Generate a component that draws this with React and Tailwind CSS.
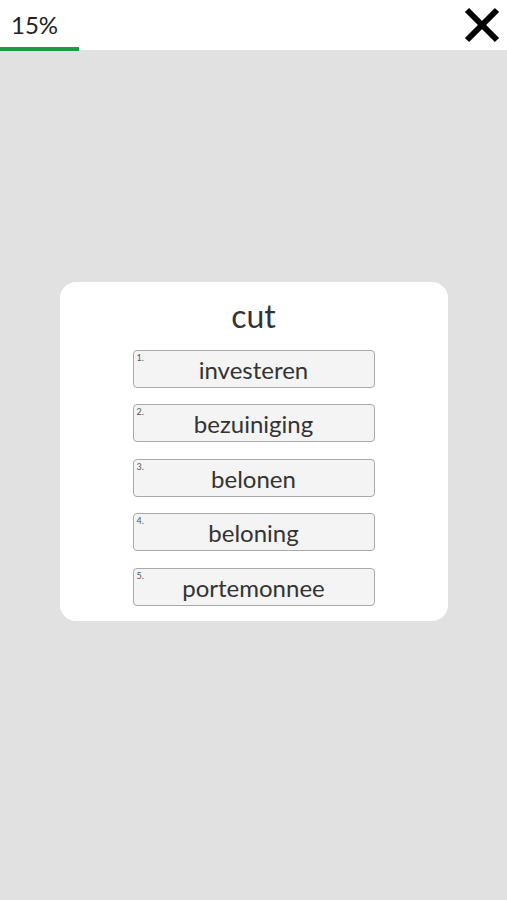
const OPTIONS = ['investeren', 'bezuiniging', 'belonen', 'beloning', 'portemonnee'];

export default function App() {
  return (
    <div className="h-[900px] w-full flex flex-col bg-[#e1e1e1] text-[#333]" style={{ fontFamily: 'Lato, "Open Sans", sans-serif' }}>
      {/* Top bar */}
      <div className="relative h-[50px] bg-white flex items-start justify-between shrink-0">
        <span className="ml-[11px] mt-[10px] text-[24px] leading-[30px] text-[#222]">15%</span>
        <svg width="36" height="36" viewBox="0 0 36 36" className="mr-[7px] mt-[7px]">
          <path d="M3 3 L33 33 M33 3 L3 33" stroke="#000" strokeWidth="6" strokeLinecap="butt" />
        </svg>
        <div className="absolute left-0 bottom-[-1px] h-[4px] w-[79px] bg-[#1f9a3e]" />
      </div>

      {/* Quiz */}
      <div className="flex-1 flex items-center justify-center pb-[50px]">
        <div className="w-[388px] bg-white rounded-[16px] pt-[15px] pb-[15px] mt-[2px] flex flex-col items-center">
          <div className="text-[32px] leading-[38px] text-[#333] mb-[15px]">cut</div>
          <div className="flex flex-col gap-[16.5px]">
            {OPTIONS.map((o, i) => (
              <button key={o} className="relative w-[242px] h-[38px] rounded-[4px] border-[1.5px] border-[#a9a9a9] bg-[#f4f4f4] flex items-center justify-center text-[24px] text-[#333]">
                <span className="absolute left-[3px] top-[2px] text-[9px] leading-[10px] text-[#555]">{i + 1}.</span>
                <span className="leading-none pt-[2px]">{o}</span>
              </button>
            ))}
          </div>
        </div>
      </div>
    </div>
  );
}
